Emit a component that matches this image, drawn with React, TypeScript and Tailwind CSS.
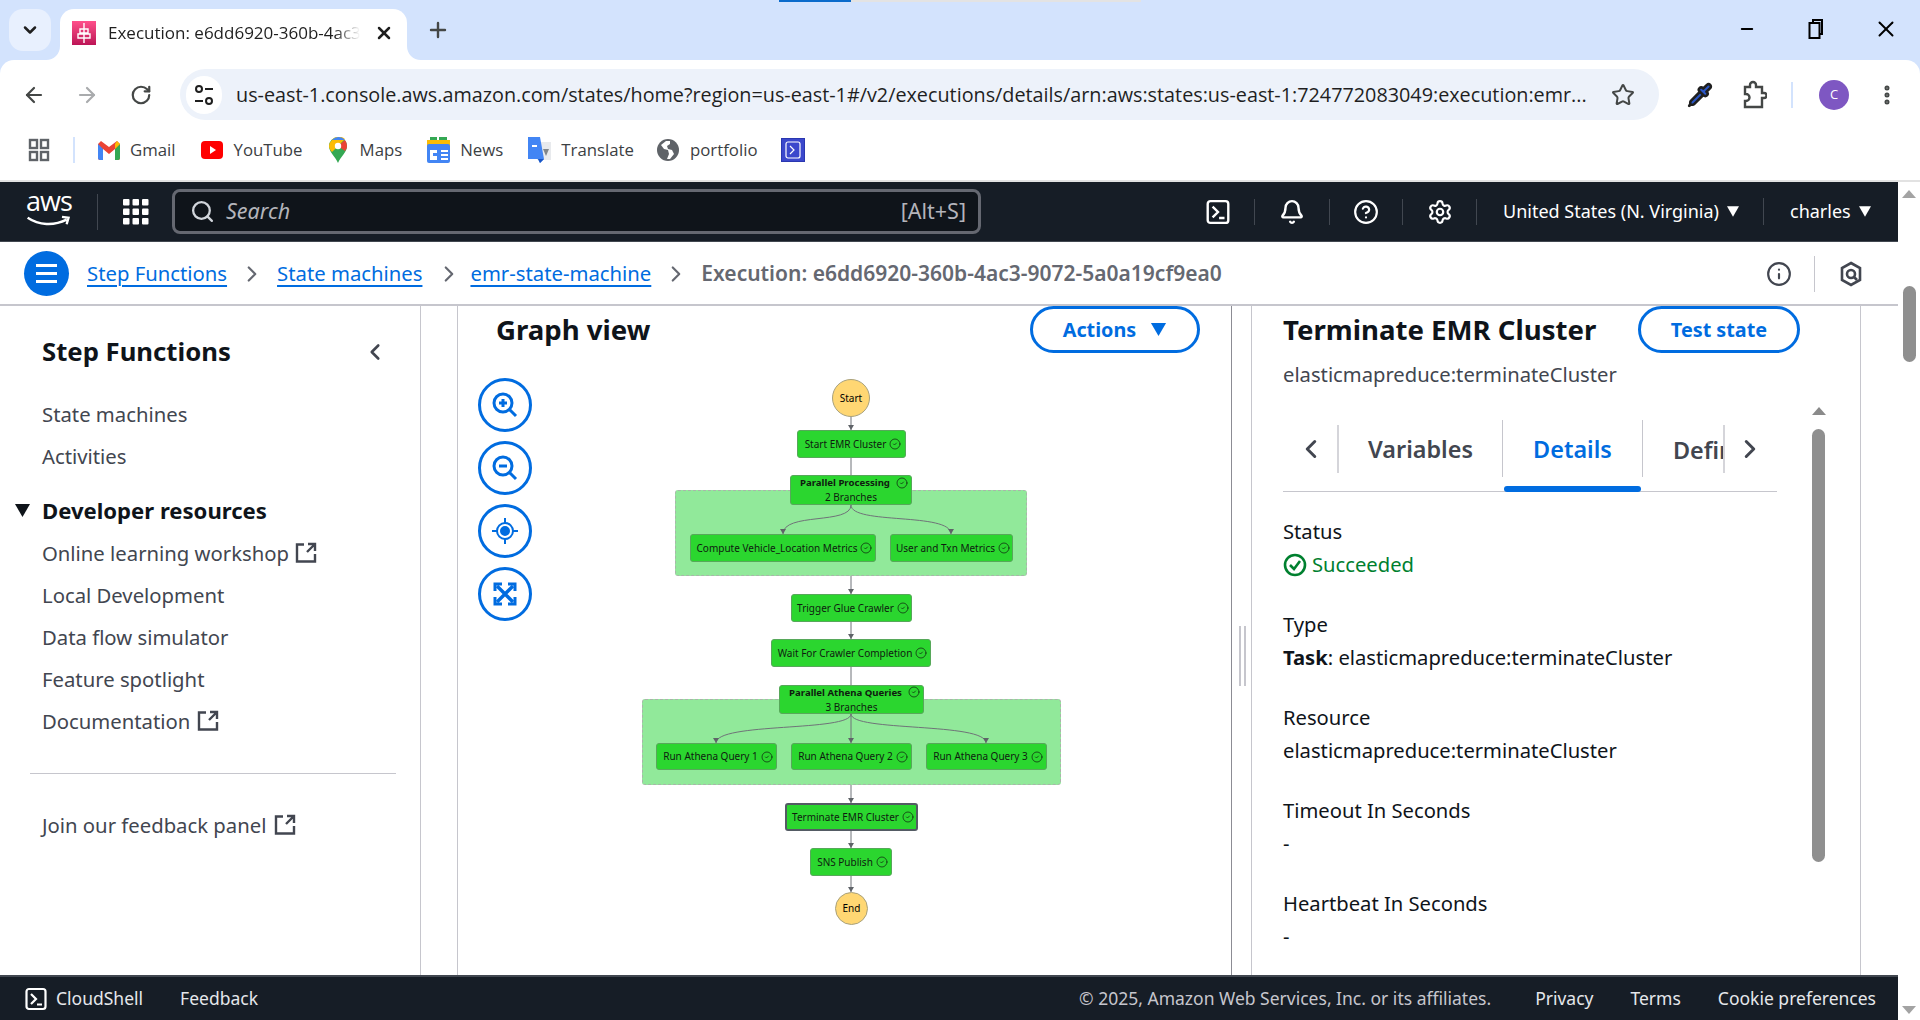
import React from "react";
import { ArrowLeft, ArrowRight, RotateCw, Star, X, Plus, ChevronDown, ChevronLeft, ChevronRight, Search, Bell, Settings, Pipette, EllipsisVertical, CircleHelp, Info, CircleCheck, Minus } from "lucide-react";

const chrome = { fontFamily: '"Open Sans","Noto Sans",sans-serif' };

function CloudShellIcon({ size = 24 }: { size?: number }) {
  return (
    <svg width={size} height={size} viewBox="0 0 24 24" fill="none" stroke="currentColor" strokeWidth="2.2">
      <rect x="2.5" y="2" width="19" height="20" rx="2.5" />
      <path d="M7 7l5 5-5 5M13 17.5h5" />
    </svg>
  );
}

function ExtLink() {
  return (
    <svg width="22" height="22" viewBox="0 0 22 22" fill="none" stroke="#424650" strokeWidth="2.4" className="shrink-0">
      <path d="M9 2.5H2v17h18V12M12 10l7-7M13 2h7v7" />
    </svg>
  );
}

function Tri({ cls }: { cls: string }) {
  return (
    <svg width="12" height="11" viewBox="0 0 14 12" className={cls}>
      <path d="M0 0h14L7 12z" fill="currentColor" />
    </svg>
  );
}

function ZoomBtn({ children }: { children: React.ReactNode }) {
  return (
    <div className="w-[54px] h-[54px] rounded-full border-[3px] border-[#006ce0] bg-white flex items-center justify-center text-[#006ce0]">
      {children}
    </div>
  );
}

type N = { x: number; y: number; r: number; b: number; t: string; sub?: string; sel?: boolean };
const nodes: N[] = [
  { x: 797, y: 430, r: 906, b: 458, t: "Start EMR Cluster" },
  { x: 790, y: 475, r: 912, b: 505, t: "Parallel Processing", sub: "2 Branches" },
  { x: 690, y: 534, r: 876, b: 562, t: "Compute Vehicle_Location Metrics" },
  { x: 890, y: 534, r: 1013, b: 562, t: "User and Txn Metrics" },
  { x: 791, y: 594, r: 912, b: 622, t: "Trigger Glue Crawler" },
  { x: 771, y: 639, r: 931, b: 667, t: "Wait For Crawler Completion" },
  { x: 779, y: 685, r: 924, b: 714, t: "Parallel Athena Queries", sub: "3 Branches" },
  { x: 656, y: 743, r: 777, b: 770, t: "Run Athena Query 1" },
  { x: 791, y: 743, r: 912, b: 770, t: "Run Athena Query 2" },
  { x: 926, y: 743, r: 1047, b: 770, t: "Run Athena Query 3" },
  { x: 785, y: 803, r: 918, b: 831, t: "Terminate EMR Cluster", sel: true },
  { x: 810, y: 848, r: 892, b: 876, t: "SNS Publish" },
];
const OX = 458;
const OY = 306;

function Arrow({ x, y }: { x: number; y: number }) {
  return <path d={`M${x - 3} ${y - 5}h6l-3 5z`} fill="#5f6368" stroke="none" />;
}

function Graph() {
  return (
    <div className="relative h-full w-full overflow-hidden">
      {[
        [675, 490, 1027, 576],
        [642, 699, 1061, 785],
      ].map(([x, y, r, b]) => (
        <div
          key={x}
          className="absolute bg-[#91e99a] border border-dashed border-[#a9b5aa] rounded-[3px]"
          style={{ left: x - OX, top: y - OY, width: r - x, height: b - y }}
        />
      ))}
      <svg className="absolute left-0 top-0" width="773" height="669" viewBox="458 306 773 669" fill="none" stroke="#6f7378" strokeWidth="1">
        <path d="M851 417V430M851 458V475M851 505C851 525 783 512 783 534M851 505C851 525 951 512 951 534M851 576V594M851 622V639M851 667V685M851 714C851 732 716 722 716 743M851 714V743M851 714C851 732 986 722 986 743M851 785V803M851 831V848M851 876V892" />
        <Arrow x={851} y={430} />
        <Arrow x={783} y={534} />
        <Arrow x={951} y={534} />
        <Arrow x={851} y={594} />
        <Arrow x={851} y={639} />
        <Arrow x={716} y={743} />
        <Arrow x={851} y={743} />
        <Arrow x={986} y={743} />
        <Arrow x={851} y={803} />
        <Arrow x={851} y={848} />
        <Arrow x={851} y={892} />
      </svg>
      <div
        className="absolute w-[38px] h-[38px] rounded-full bg-[#ffd773] border border-[#a8a17c] flex items-center justify-center text-[10px] text-black"
        style={{ left: 832 - OX, top: 379 - OY }}
      >
        Start
      </div>
      <div
        className="absolute w-[33px] h-[33px] rounded-full bg-[#ffd773] border border-[#a8a17c] flex items-center justify-center text-[10px] text-black"
        style={{ left: 835 - OX, top: 892 - OY }}
      >
        End
      </div>
      {nodes.map((n) => (
        <div
          key={n.t}
          className={`absolute bg-[#2bd62f] rounded-[3px] flex flex-col items-center justify-center text-[10px] leading-[15px] text-[#0f1b0f] ${n.sel ? "border-[2px] border-[#545b64]" : "border border-[#57a85a]"}`}
          style={{ left: n.x - OX, top: n.y - OY, width: n.r - n.x, height: n.b - n.y }}
        >
          <div className={`flex items-center whitespace-nowrap ${n.sub ? "gap-[6px] ml-[6px]" : "gap-[3px] ml-[3px]"}`}>
            <span className={n.sub ? "font-bold text-[9.6px]" : ""}>{n.t}</span>
            <CircleCheck size={12} strokeWidth={1.4} />
          </div>
          {n.sub && <div className="whitespace-nowrap">{n.sub}</div>}
        </div>
      ))}
      <div className="absolute left-[20px] top-[72px] flex flex-col gap-[9px]">
        <ZoomBtn>
          <svg width="28" height="28" viewBox="0 0 28 28" fill="none" stroke="currentColor" strokeWidth="3">
            <circle cx="12" cy="12" r="9" />
            <path d="M12 8v8M8 12h8" />
            <path d="M19 19l6 6" />
          </svg>
        </ZoomBtn>
        <ZoomBtn>
          <svg width="28" height="28" viewBox="0 0 28 28" fill="none" stroke="currentColor" strokeWidth="3">
            <circle cx="12" cy="12" r="9" />
            <path d="M8 12h8" />
            <path d="M19 19l6 6" />
          </svg>
        </ZoomBtn>
        <ZoomBtn>
          <svg width="28" height="28" viewBox="0 0 28 28" fill="none" stroke="currentColor" strokeWidth="2">
            <circle cx="14" cy="14" r="8" />
            <circle cx="14" cy="14" r="4" fill="currentColor" />
            <path d="M14 1v5M14 22v5M1 14h5M22 14h5" />
          </svg>
        </ZoomBtn>
        <ZoomBtn>
          <svg width="26" height="26" viewBox="0 0 26 26" fill="none" stroke="currentColor" strokeWidth="3">
            <path d="M3 10V3h7M16 3h7v7M23 16v7h-7M10 23H3v-7" />
            <path d="M5 5l16 16M21 5L5 21" strokeWidth="3.4" />
          </svg>
        </ZoomBtn>
      </div>
    </div>
  );
}

function Field({ label, children }: { label: string; children: React.ReactNode }) {
  return (
    <div className="mb-[27px]">
      <div className="h-[33px] leading-[33px]">{label}</div>
      <div className="h-[33px] leading-[33px]">{children}</div>
    </div>
  );
}

export default function App() {
  return (
    <div className="w-[1920px] h-[1020px] overflow-hidden flex flex-col bg-white relative" style={{ fontFamily: '"Noto Sans",sans-serif' }}>
      {/* Browser chrome */}
      <div className="h-[182px] shrink-0 bg-[#d3e3fd] flex flex-col text-[#1f1f1f] relative" style={chrome}>
        <div className="absolute left-[779px] top-0 w-[72px] h-[2px] bg-[#0b6bcb]" />
        <div className="absolute left-[851px] top-0 w-[290px] h-[2px] bg-[#e3e3e3]" />
        <div className="h-[60px] flex items-end pl-[9px]">
          <div className="w-[42px] h-[42px] mb-[9px] rounded-[14px] bg-[#e8f0fe] flex items-center justify-center">
            <ChevronDown size={20} strokeWidth={3} />
          </div>
          <div className="ml-[9px] w-[347px] h-[51px] bg-white rounded-t-[14px] flex items-center pl-[12px] pb-[4px] relative">
            <svg width="14" height="14" viewBox="0 0 14 14" className="absolute left-[-14px] bottom-0">
              <path d="M14 0C14 8 8 14 0 14H14Z" fill="white" />
            </svg>
            <svg width="14" height="14" viewBox="0 0 14 14" className="absolute right-[-14px] bottom-0">
              <path d="M0 0C0 8 6 14 14 14H0Z" fill="white" />
            </svg>
            <div className="w-[24px] h-[24px] bg-gradient-to-b from-[#ff4f8b] to-[#bc1356] flex items-center justify-center shrink-0">
              <svg width="18" height="20" viewBox="0 0 18 20" fill="none" stroke="white" strokeWidth="1.4">
                <path d="M9 0v20M5 6h8v4H5zM3 11h12v4H3z" />
              </svg>
            </div>
            <div className="ml-[12px] w-[252px] overflow-hidden whitespace-nowrap text-[17px] [mask-image:linear-gradient(to_right,black_90%,transparent)]">
              Execution: e6dd6920-360b-4ac3-9072
            </div>
            <X size={20} strokeWidth={3} className="ml-[14px]" />
          </div>
          <Plus size={24} strokeWidth={2.4} className="ml-[19px] mb-[18px] text-[#444746]" />
          <div className="flex-1" />
          <div className="flex items-center mb-[18px] text-black">
            <Minus size={18} strokeWidth={2.5} className="mr-[52px]" />
            <svg width="16" height="22" viewBox="0 0 16 22" fill="none" stroke="currentColor" strokeWidth="2" className="mr-[49px]">
              <rect x="1.5" y="5" width="10" height="15" />
              <path d="M5 5V2h9v14h-2" />
            </svg>
            <X size={26} strokeWidth={1.8} className="mr-[21px]" />
          </div>
        </div>
        <div className="h-[60px] pt-[9px] bg-white rounded-t-[14px] flex items-center pl-[22px]">
          <ArrowLeft size={24} strokeWidth={2.2} className="text-[#444746]" />
          <ArrowRight size={24} strokeWidth={2.2} className="ml-[29px] text-[#a9abad]" />
          <RotateCw size={22} strokeWidth={2.4} className="ml-[31px] text-[#444746]" />
          <div className="ml-[28px] w-[1479px] h-[51px] rounded-full bg-[#edf2fa] flex items-center pl-[6px]">
            <div className="w-[36px] h-[38px] rounded-full bg-white flex items-center justify-center shrink-0">
              <svg width="20" height="22" viewBox="0 0 20 22" fill="none" stroke="#1f1f1f" strokeWidth="2">
                <circle cx="5" cy="5" r="3" />
                <circle cx="15" cy="17" r="3" />
                <path d="M11 5h8M1 17h8" />
              </svg>
            </div>
            <div className="ml-[14px] w-[1363px] whitespace-nowrap overflow-hidden text-[19.8px] text-[#1f1f1f]">
              us-east-1.console.aws.amazon.com/states/home?region=us-east-1#/v2/executions/details/arn:aws:states:us-east-1:724772083049:execution:emr...
            </div>
            <Star size={24} strokeWidth={2} className="ml-[12px] text-[#444746]" />
          </div>
          <Pipette size={26} strokeWidth={2.4} className="ml-[28px] text-[#1f1f1f] fill-[#2a56c6]" />
          <svg width="26" height="30" viewBox="0 0 26 30" fill="none" stroke="#444746" strokeWidth="2.4" className="ml-[28px]">
            <path d="M4 7h5V5a3 3 0 016 0v2h6v6h2a2.5 2.5 0 010 5h-2v9H4v-6h1a3.5 3.5 0 000-7H4z" />
          </svg>
          <div className="ml-[24px] w-[2px] h-[26px] bg-[#d3e3fd]" />
          <div className="ml-[26px] w-[30px] h-[30px] rounded-full bg-[#7e57c2] text-white flex items-center justify-center text-[13px]">C</div>
          <EllipsisVertical size={24} strokeWidth={3} className="ml-[26px] text-[#444746]" />
        </div>
        <div className="h-[62px] bg-white border-b-[2px] border-[#e2e2e2] flex items-center pl-[28px] text-[16.8px] text-[#3c4043]">
          <svg width="22" height="24" viewBox="0 0 22 24" fill="none" stroke="#5f6368" strokeWidth="2.4">
            <rect x="2" y="2" width="7" height="8" />
            <rect x="13" y="2" width="7" height="8" />
            <rect x="2" y="14" width="7" height="8" />
            <rect x="13" y="14" width="7" height="8" />
          </svg>
          <div className="ml-[23px] w-[2px] h-[26px] bg-[#d3e3fd]" />
          <svg width="22" height="20" viewBox="0 0 22 20" className="ml-[23px]">
            <path d="M0 4v14a2 2 0 002 2h3V9l6 5 6-5v11h3a2 2 0 002-2V4l-3-3-8 6-8-6z" fill="#ea4335" />
            <path d="M0 4v14a2 2 0 002 2h3V9z" fill="#4285f4" />
            <path d="M22 4v14a2 2 0 01-2 2h-3V9z" fill="#34a853" />
            <path d="M19 1l3 3-5 5V4z" fill="#fbbc04" />
          </svg>
          <span className="ml-[10px]">Gmail</span>
          <svg width="22" height="18" viewBox="0 0 22 18" className="ml-[25px]">
            <rect width="22" height="18" rx="4" fill="#f00" />
            <path d="M9 5l6 4-6 4z" fill="#fff" />
          </svg>
          <span className="ml-[11px]">YouTube</span>
          <svg width="18" height="26" viewBox="0 0 18 26" className="ml-[26px]">
            <path d="M9 0a9 9 0 019 9c0 6-6 10-9 17C6 19 0 15 0 9a9 9 0 019-9z" fill="#34a853" />
            <path d="M3 3a9 9 0 0113-1L3 15C1 13 0 11 0 9a9 9 0 013-6z" fill="#fbbc04" />
            <path d="M9 0a9 9 0 017 3L3 3a9 9 0 016-3z" fill="#4285f4" />
            <path d="M16 3a9 9 0 012 6c0 2-1 4-2 5L9 9z" fill="#ea4335" />
            <circle cx="9" cy="9" r="3.2" fill="#fff" />
          </svg>
          <span className="ml-[13px]">Maps</span>
          <svg width="23" height="26" viewBox="0 0 23 26" className="ml-[25px]">
            <path d="M3 0h7v8H3zM12 0h8v8h-8z" fill="#34a853" />
            <path d="M0 3h23v8H0z" fill="#fbbc04" />
            <rect y="7" width="23" height="19" rx="2" fill="#4285f4" />
            <path d="M14 13h7v2h-7zM14 17h7v2h-7zM14 21h7v2h-7zM3 13h7v3H6v3h4v4H3z" fill="#fff" />
          </svg>
          <span className="ml-[10px]">News</span>
          <svg width="23" height="26" viewBox="0 0 23 26" className="ml-[25px]">
            <rect x="9" y="5" width="14" height="18" fill="#e8eaed" />
            <path d="M0 0h12l4 22-4 4-2-4H0z" fill="#4285f4" />
            <path d="M12 26l4-4h-6z" fill="#1a56c4" />
            <path d="M4 8h5v2H4z" fill="#fff" />
            <path d="M15 12h6l-3 7z" fill="#80868b" />
          </svg>
          <span className="ml-[10px]">Translate</span>
          <svg width="22" height="22" viewBox="0 0 22 22" className="ml-[23px]">
            <circle cx="11" cy="11" r="11" fill="#5f6368" />
            <path d="M9 2L4 6l3 4 4 1 1 4-2 5h3l4-5-2-4-4-1-1-3 3-2V2z" fill="#fff" />
          </svg>
          <span className="ml-[11px]">portfolio</span>
          <div className="ml-[23px] w-[24px] h-[24px] bg-[#3b48cc] border border-[#2a37b0] flex items-center justify-center text-white">
            <svg width="16" height="18" viewBox="0 0 16 18" fill="none" stroke="white" strokeWidth="1.2">
              <rect x="1" y="1" width="14" height="16" rx="2" />
              <path d="M5 5l4 4-4 4" />
            </svg>
          </div>
        </div>
      </div>

      <div className="flex-1 flex min-h-0">
        <div className="w-[1898px] flex flex-col">
          {/* AWS header */}
          <div className="h-[60px] shrink-0 bg-[#161d26] flex items-center text-white text-[18px] border-b border-[#414750]">
            <div className="w-[98px] pl-[26px] relative h-full">
              <div className="text-[27px] font-medium leading-[26px] pt-[6px] tracking-[-1px]" style={{ fontFamily: '"Open Sans",sans-serif' }}>aws</div>
              <svg width="48" height="13" viewBox="0 0 48 14" className="absolute left-[25px] top-[33px]" fill="none" stroke="white" strokeWidth="2.6">
                <path d="M1 3c12 8 28 9 42 2M38 2l7 1-2 7" />
              </svg>
              <div className="absolute left-[97px] top-[12px] w-px h-[36px] bg-[#414750]" />
            </div>
            <svg width="26" height="26" viewBox="0 0 26 26" fill="white" className="ml-[25px]">
              {[0, 9.5, 19].map((y) =>
                [0, 9.5, 19].map((x) => <rect key={`${x}-${y}`} x={x} y={y} width="6.5" height="6.5" rx="1" />)
              )}
            </svg>
            <div className="ml-[23px] w-[809px] h-[45px] rounded-[8px] bg-[#0f141a] border-[3px] border-[#656871] flex items-center pl-[15px] pr-[12px] text-[#b4b4bb]">
              <Search size={25} strokeWidth={2.2} className="text-[#d1d5db]" />
              <span className="ml-[11px] italic text-[21.5px]">Search</span>
              <span className="ml-auto text-[21.5px]">[Alt+S]</span>
            </div>
            <div className="flex items-center h-[36px] ml-auto">
              <div className="text-white w-[74px] flex justify-center border-r border-[#414750]"><span className="h-[26px] flex"><CloudShellIcon size={26} /></span></div>
              <div className="w-[75px] flex justify-center border-r border-[#414750]"><Bell size={26} strokeWidth={2.2} /></div>
              <div className="w-[73px] flex justify-center border-r border-[#414750]"><CircleHelp size={26} strokeWidth={2} /></div>
              <div className="w-[74px] flex justify-center border-r border-[#414750]"><Settings size={26} strokeWidth={2} /></div>
              <div className="w-[287px] flex items-center pl-[26px] border-r border-[#414750]">
                <span className="whitespace-nowrap text-[18px]">United States (N. Virginia)</span>
                <Tri cls="ml-[8px] text-white" />
              </div>
              <div className="w-[134px] flex items-center pl-[26px]">
                <span className="text-[18px]">charles</span>
                <Tri cls="ml-[8px] text-white" />
              </div>
            </div>
          </div>
          {/* Breadcrumbs */}
          <div className="h-[64px] shrink-0 flex items-center border-b-[2px] border-[#c6c6cd] pl-[24px] pt-[1px] text-[20.3px]">
            <div className="w-[45px] h-[45px] rounded-full bg-[#006ce0] flex flex-col items-center justify-center gap-[5px]">
              <div className="w-[21px] h-[3px] bg-white" />
              <div className="w-[21px] h-[3px] bg-white" />
              <div className="w-[21px] h-[3px] bg-white" />
            </div>
            <a className="ml-[18px] text-[#006ce0] underline decoration-2 underline-offset-[4px]">Step Functions</a>
            <ChevronRight size={26} strokeWidth={2} className="mx-[12px] text-[#656871]" />
            <a className="text-[#006ce0] underline decoration-2 underline-offset-[4px]">State machines</a>
            <ChevronRight size={26} strokeWidth={2} className="ml-[14px] mr-[8px] text-[#656871]" />
            <a className="text-[#006ce0] underline decoration-2 underline-offset-[4px]">emr-state-machine</a>
            <ChevronRight size={26} strokeWidth={2} className="mx-[12px] text-[#656871]" />
            <span className="font-semibold text-[#656871] text-[21px]">Execution: e6dd6920-360b-4ac3-9072-5a0a19cf9ea0</span>
            <div className="ml-auto flex items-center text-[#424650]">
              <Info size={26} strokeWidth={2} />
              <div className="ml-[22px] w-px h-[36px] bg-[#c6c6cd]" />
              <svg width="24" height="26" viewBox="0 0 24 26" fill="none" stroke="currentColor" strokeWidth="2.6" className="ml-[24px] mr-[35px]">
                <path d="M12 2l9 5v12l-9 5-9-5V7z" />
                <circle cx="12" cy="13" r="4" />
                <path d="M15 16l3 3" />
              </svg>
            </div>
          </div>
          {/* Body */}
          <div className="flex-1 flex min-h-0">
            <aside className="w-[421px] shrink-0 border-r border-[#c6c6cd] pt-[25px] pl-[42px] text-[20.3px] text-[#424650]">
              <div className="flex items-center h-[42px] pr-[32px]">
                <span className="text-[25.7px] font-bold text-[#0f141a]">Step Functions</span>
                <ChevronLeft size={26} strokeWidth={2.4} className="ml-auto" />
              </div>
              <div className="mt-[20px] h-[42px] leading-[42px]">State machines</div>
              <div className="h-[42px] leading-[42px]">Activities</div>
              <div className="mt-[12px] h-[43px] leading-[42px] font-bold text-[#0f141a] text-[22.1px] relative">
                <Tri cls="absolute left-[-27px] top-[15px] text-[#0f141a] w-[15px] h-[13px]" />
                Developer resources
              </div>
              <div className="h-[42px] flex items-center gap-[6px]">Online learning workshop <ExtLink /></div>
              <div className="h-[42px] leading-[42px]">Local Development</div>
              <div className="h-[42px] leading-[42px]">Data flow simulator</div>
              <div className="h-[42px] leading-[42px]">Feature spotlight</div>
              <div className="h-[42px] flex items-center gap-[7px]">Documentation <ExtLink /></div>
              <div className="mt-[31px] -ml-[12px] w-[366px] h-px bg-[#c6c6cd]" />
              <div className="mt-[30px] h-[42px] flex items-center gap-[8px]">Join our feedback panel <ExtLink /></div>
            </aside>
            <div className="w-[37px] shrink-0 border-r border-[#c6c6cd]" />
            <main className="w-[774px] shrink-0 border-r border-[#8c8c94] flex flex-col min-h-0 relative">
              <div className="h-[47px] shrink-0 flex items-center pl-[38px] pr-[31px] absolute left-0 right-0 top-0 z-10">
                <span className="text-[27.6px] font-bold text-[#0f141a]">Graph view</span>
                <div className="ml-auto w-[170px] h-[47px] rounded-[24px] border-[3px] border-[#006ce0] flex items-center justify-center gap-[14px] font-bold text-[#006ce0] text-[19.8px] bg-white">
                  Actions <Tri cls="text-[#006ce0] w-[17px] h-[13px]" />
                </div>
              </div>
              <Graph />
            </main>
            <div className="w-[20px] shrink-0 border-r border-[#c6c6cd] relative">
              <div className="absolute left-[7px] top-[320px] w-[7px] h-[60px] border-x-2 border-[#c6c6cd]" />
            </div>
            <section className="w-[609px] shrink-0 border-r border-[#c6c6cd] pl-[31px] flex flex-col min-h-0">
              <div className="flex items-center h-[47px] w-[517px] shrink-0">
                <span className="text-[27.6px] font-bold text-[#0f141a] whitespace-nowrap">Terminate EMR Cluster</span>
                <div className="ml-auto w-[162px] h-[47px] rounded-[24px] border-[3px] border-[#006ce0] flex items-center justify-center font-bold text-[#006ce0] text-[19.8px]">Test state</div>
              </div>
              <div className="mt-[6px] h-[30px] leading-[30px] text-[20.2px] text-[#424650]">elasticmapreduce:terminateCluster</div>
              <div className="flex flex-1 min-h-0 mt-[16px]">
                <div className="w-[494px] shrink-0 text-[20.2px] text-[#0f141a]">
                  <div className="h-[87px] border-b border-[#c6c6cd] relative flex items-start pt-[15px]">
                    <div className="w-[56px] flex justify-start pl-[13px] h-[48px] mt-[5px] items-center border-r-2 border-[#d5d5da]">
                      <ChevronLeft size={30} strokeWidth={2.4} className="text-[#424650]" />
                    </div>
                    <div className="w-[164px] text-center h-[57px] leading-[59px] border-r border-[#c6c6cd] text-[23.4px] font-semibold text-[#424650]">Variables</div>
                    <div className="w-[140px] text-center h-[57px] leading-[59px] border-r border-[#c6c6cd] text-[23.4px] font-semibold text-[#006ce0]">Details</div>
                    <div className="w-[82px] pl-[30px] overflow-hidden h-[48px] mt-[5px] leading-[50px] text-[23.4px] font-semibold text-[#424650] border-r-2 border-[#d5d5da]">Definition</div>
                    <ChevronRight size={30} strokeWidth={2.4} className="ml-[10px] mt-[14px] text-[#424650]" />
                    <div className="absolute left-[221px] bottom-[-1px] w-[137px] h-[6px] rounded-[3px] bg-[#006ce0]" />
                  </div>
                  <div className="pt-[23px]">
                    <Field label="Status">
                      <span className="flex items-center gap-[5px] text-[#00802f]">
                        <svg width="24" height="24" viewBox="0 0 24 24" fill="none" stroke="currentColor" strokeWidth="2.6">
                          <circle cx="12" cy="12" r="10" />
                          <path d="M7 12l4 4 6-8" />
                        </svg>
                        Succeeded
                      </span>
                    </Field>
                    <Field label="Type">
                      <b className="font-bold">Task</b>: elasticmapreduce:terminateCluster
                    </Field>
                    <Field label="Resource">elasticmapreduce:terminateCluster</Field>
                    <Field label="Timeout In Seconds">-</Field>
                    <Field label="Heartbeat In Seconds">-</Field>
                  </div>
                </div>
                <div className="ml-[35px] w-[13px] relative">
                  <div className="absolute left-[0px] top-[2px] w-0 h-0 border-x-[7px] border-x-transparent border-b-[8px] border-b-[#8a8a8a]" />
                  <div className="absolute left-0 top-[24px] w-[13px] h-[433px] rounded-full bg-[#8f8f8f]" />
                </div>
              </div>
            </section>
            <div className="flex-1" />
          </div>
          {/* Footer */}
          <div className="h-[45px] shrink-0 bg-[#161d26] border-t-2 border-[#414750] flex items-center text-[#e5e7eb] text-[17.5px] pl-[24px]">
            <span className="text-white flex"><CloudShellIcon size={24} /></span>
            <span className="ml-[8px]">CloudShell</span>
            <span className="ml-[37px]">Feedback</span>
            <span className="ml-auto text-[#c6c6cd]">© 2025, Amazon Web Services, Inc. or its affiliates.</span>
            <span className="ml-[44px]">Privacy</span>
            <span className="ml-[37px]">Terms</span>
            <span className="ml-[37px] mr-[22px]">Cookie preferences</span>
          </div>
        </div>
        {/* page scrollbar */}
        <div className="flex-1 bg-white relative">
          <div className="absolute left-[4px] top-[8px] w-0 h-0 border-x-[7px] border-x-transparent border-b-[8px] border-b-[#a3a3a3]" />
          <div className="absolute left-[5px] top-[104px] w-[13px] h-[76px] rounded-full bg-[#8f8f8f]" />
          <div className="absolute left-[4px] bottom-[6px] w-0 h-0 border-x-[7px] border-x-transparent border-t-[8px] border-t-[#a3a3a3]" />
        </div>
      </div>
    </div>
  );
}
